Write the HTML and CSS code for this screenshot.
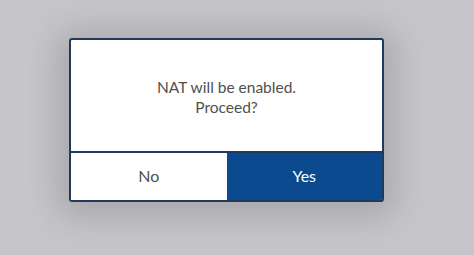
FILE: index.html
```html
<!DOCTYPE html>
<html>
<head>
<meta charset="utf-8">
<link rel="stylesheet" href="styles.css">
</head>
<body>
<div class="screen">
  <div class="dialog">
    <div class="message">
      <p>NAT will be enabled.</p>
      <p>Proceed?</p>
    </div>
    <div class="actions">
      <button class="btn btn-no">No</button>
      <button class="btn btn-yes">Yes</button>
    </div>
  </div>
</div>
</body>
</html>
```
FILE: styles.css
```css
html, body {
  margin: 0;
  padding: 0;
}
body {
  width: 474px;
  height: 255px;
  overflow: hidden;
  background: #c6c6ca;
  font-family: Lato, "Open Sans", "Liberation Sans", sans-serif;
}
.screen {
  box-sizing: border-box;
  width: 474px;
  height: 255px;
  padding: 38px 0 0 69px;
}
.dialog {
  box-sizing: border-box;
  width: 315px;
  height: 164px;
  border: 2px solid #1d3b5e;
  border-radius: 3px;
  background: #fff;
  display: flex;
  flex-direction: column;
  overflow: hidden;
  box-shadow: 0 4px 34px 10px rgba(0, 0, 0, 0.16);
}
.message {
  flex: 1;
  display: flex;
  flex-direction: column;
  align-items: center;
  justify-content: center;
  color: #505050;
  font-size: 15.5px;
  line-height: 20px;
  border-bottom: 2px solid #1d3b5e;
  padding-top: 2px;
}
.message p {
  margin: 0;
}
.actions {
  display: flex;
  height: 47px;
}
.btn {
  flex: 1;
  border: none;
  margin: 0;
  font-family: inherit;
  font-size: 16px;
  padding: 0 0 2px 0;
}
.btn-no {
  background: #fff;
  color: #505050;
}
.btn-yes {
  background: #0b4a8e;
  color: #fff;
}
```
